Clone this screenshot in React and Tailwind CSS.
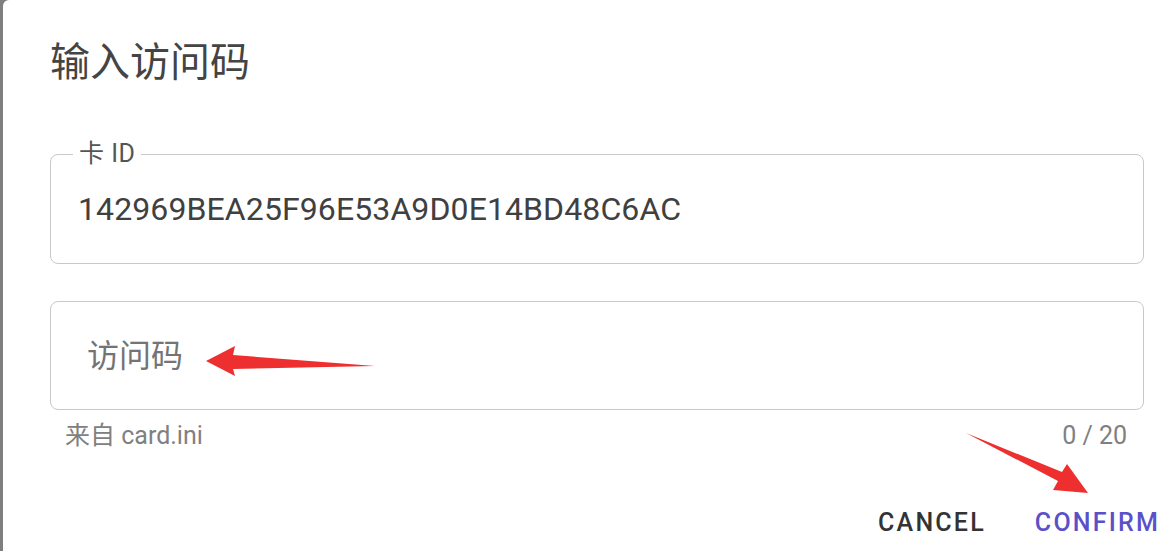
const font = { fontFamily: "Roboto, 'Noto Sans CJK SC', sans-serif" }

function Arrows() {
  return (
    <svg className="absolute inset-0 pointer-events-none" width="1173" height="551" viewBox="0 0 1173 551">
      <polygon points="206,361 235,346 233,355 375,366 233,369 235,376" fill="#ee2f2f" />
      <polygon points="966,433 1062,472 1067,464 1088,493 1053,490 1058,481" fill="#ee2f2f" />
    </svg>
  )
}

export default function App() {
  return (
    <div className="relative flex h-[551px] w-[1173px] overflow-hidden bg-[#7f7f7f]" style={font}>
      <div className="w-[3px] shrink-0" />
      <div className="flex-1 bg-white rounded-tl-[6px] pl-[47px] pt-[43px]">
        <h2 className="text-[40px] leading-none text-[#444] font-normal">输入访问码</h2>

        <div className="relative mt-[71px] w-[1094px] h-[110px] border border-[#c9c9c9] rounded-[8px] flex items-center pl-[27px]">
          <span className="absolute left-[22px] top-[-13px] px-[6px] bg-white text-[25px] leading-[24px] tracking-[0.5px] text-[#555]">卡 ID</span>
          <span className="text-[32px] leading-none tracking-[0.1px] text-[#404040]">142969BEA25F96E53A9D0E14BD48C6AC</span>
        </div>

        <div className="mt-[37px] w-[1094px] h-[109px] border border-[#c9c9c9] rounded-[8px] flex items-center pl-[36px]">
          <span className="text-[32px] leading-none text-[#747474]">访问码</span>
        </div>

        <div className="mt-[14px] w-[1094px] flex justify-between pl-[15px] pr-[17px] text-[25px] leading-[24px] text-[#808080]">
          <span>来自 card.ini</span>
          <span>0 / 20</span>
        </div>

        <div className="mt-[62px] flex justify-end gap-[49px] pr-[13px] text-[25px] leading-[25px] font-medium tracking-[2.2px]">
          <button className="text-[#333]">CANCEL</button>
          <button className="text-[#5a50c8]">CONFIRM</button>
        </div>
      </div>
      <Arrows />
    </div>
  )
}
